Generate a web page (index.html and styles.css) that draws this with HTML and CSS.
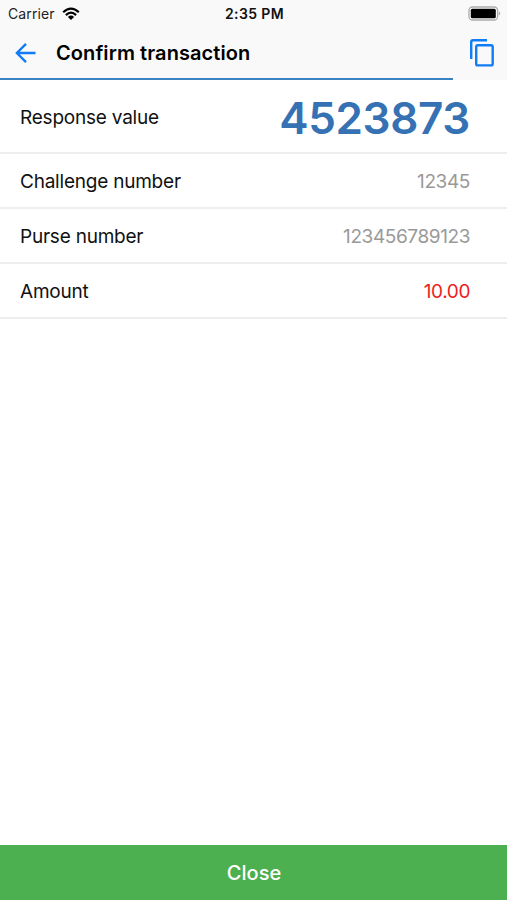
FILE: index.html
```html
<!DOCTYPE html>
<html lang="en">
<head>
<meta charset="utf-8">
<title>Confirm transaction</title>
<link rel="stylesheet" href="styles.css">
</head>
<body>
<header class="header">
  <div class="status">
    <div class="carrier">
      <span class="carrier-name">Carrier</span>
      <svg class="wifi" width="18" height="14" viewBox="0 0 18 14" fill="none" stroke="#000" stroke-width="2.2">
        <path d="M1.2 5.2Q9-2 16.8 5.2M3.9 8.1Q9 3.3 14.1 8.1"/>
        <path d="M5.9 10Q9 7.2 12.1 10L9 13Z" fill="#000" stroke="none"/>
      </svg>
    </div>
    <span class="time">2:35 PM</span>
    <svg class="battery" width="33" height="15" viewBox="0 0 33 15">
      <rect x="1" y="1" width="28.6" height="13" rx="3.5" fill="#fff" stroke="#aaa" stroke-width="1.3"/>
      <rect x="2.8" y="2.8" width="25" height="9.4" rx="1.5" fill="#000"/>
      <path d="M30.8 5.5q1.4.6 1.4 2t-1.4 2z" fill="#aaa"/>
    </svg>
  </div>
  <nav class="nav">
    <svg class="back" width="22" height="22" viewBox="0 0 22 22" fill="none" stroke="#107cf6" stroke-width="2.4">
      <path d="M20.5 11H2.5M11 1.9L1.9 11L11 20.1"/>
    </svg>
    <h1 class="title">Confirm transaction</h1>
    <svg class="copy" width="26" height="30" viewBox="0 0 26 30" fill="none" stroke="#107cf6" stroke-width="2.4">
      <path d="M2.2 21V4Q2.2 2.2 4 2.2H18"/>
      <rect x="7.2" y="7.2" width="16.5" height="20.2" rx="1.7"/>
    </svg>
  </nav>
  <div class="progress"></div>
</header>
<main class="rows">
  <div class="row row-main"><span class="label">Response value</span><span class="response">4523873</span></div>
  <div class="row"><span class="label">Challenge number</span><span class="value">12345</span></div>
  <div class="row"><span class="label">Purse number</span><span class="value">123456789123</span></div>
  <div class="row"><span class="label">Amount</span><span class="value amount">10.00</span></div>
</main>
<button class="close">Close</button>
</body>
</html>
```
FILE: styles.css
```css
* { box-sizing: border-box; }
body {
  margin: 0;
  height: 900px;
  display: flex;
  flex-direction: column;
  background: #fff;
  color: #111;
  font-family: Inter, "Liberation Sans", sans-serif;
  overflow: hidden;
}
.header { height: 80px; background: #f9f9f9; display: flex; flex-direction: column; flex: none; }
.status {
  height: 27px;
  display: grid;
  grid-template-columns: 1fr auto 1fr;
  align-items: center;
  padding: 0 6px 0 8px;
}
.carrier { display: flex; align-items: center; gap: 7px; font-size: 14px; color: #222; }
.carrier-name { letter-spacing: .1px; }
.time { font-size: 14px; font-weight: 600; letter-spacing: .4px; }
.battery { justify-self: end; }
.nav { height: 51px; display: flex; align-items: center; padding: 0 12px 0 15px; }
.title { margin: 0 auto 0 19px; padding-top: 1px; font-size: 20px; font-weight: 600; line-height: 24px; letter-spacing: .08px; color: #000; }
.progress { width: 453px; height: 2px; background: #3b82c4; }
.rows { flex: 1; }
.row {
  height: 55px;
  display: flex;
  align-items: center;
  justify-content: space-between;
  padding: 2px 37px 0 20px;
  border-bottom: 2px solid #eee;
  font-size: 19px;
}
.row-main { height: 74px; padding-top: 3px; }
.label { letter-spacing: -.22px; }
.value { color: #999; letter-spacing: -.4px; }
.amount { color: #ee1c1c; }
.response { font-size: 44px; font-weight: 600; line-height: 54px; letter-spacing: -.35px; color: #3672b3; }
.close {
  flex: none;
  height: 55px;
  border: 0;
  padding: 2px 0 0 1px;
  background: #4caf50;
  color: #fff;
  font: 500 20px/53px Inter, "Liberation Sans", sans-serif;
}
```
